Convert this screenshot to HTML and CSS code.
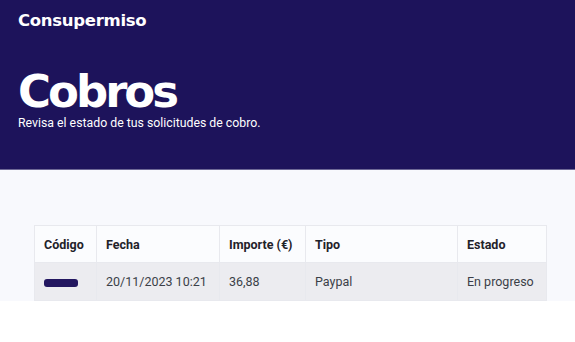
FILE: index.html
```html
<!DOCTYPE html>
<html lang="es">
<head>
<meta charset="utf-8">
<title>Cobros</title>
<link rel="stylesheet" href="styles.css">
</head>
<body>
<header class="hero">
  <div class="brand">Consupermiso</div>
  <h1 class="title">Cobros</h1>
  <p class="subtitle">Revisa el estado de tus solicitudes de cobro.</p>
</header>
<main class="content">
  <table class="table">
    <thead>
      <tr>
        <th class="c1">Código</th>
        <th class="c2">Fecha</th>
        <th class="c3">Importe (€)</th>
        <th class="c4">Tipo</th>
        <th class="c5">Estado</th>
      </tr>
    </thead>
    <tbody>
      <tr>
        <td><span class="redact"></span></td>
        <td>20/11/2023 10:21</td>
        <td>36,88</td>
        <td>Paypal</td>
        <td>En progreso</td>
      </tr>
    </tbody>
  </table>
</main>
</body>
</html>
```
FILE: styles.css
```css
* { box-sizing: border-box; }
html, body { margin: 0; padding: 0; background: #ffffff; }
body { font-family: Roboto, "Liberation Sans", sans-serif; color: #2b2f38; }

.hero {
  background: #1d135b;
  height: 170px;
  padding: 10px 18px 0;
  color: #ffffff;
  border-bottom: 1px solid #6d6896;
}
.brand {
  font-family: "DejaVu Sans", sans-serif;
  font-weight: 700;
  font-size: 16.5px;
  line-height: 22px;
  letter-spacing: -0.3px;
}
.title {
  margin: 37px 0 0;
  font-family: "DejaVu Sans", sans-serif;
  font-weight: 700;
  font-size: 45px;
  line-height: 46px;
  letter-spacing: -3px;
}
.subtitle {
  margin: 0;
  font-size: 12.3px;
  line-height: 16px;
}

.content {
  background: #f8f9fd;
  padding: 55px 29px 0 34px;
}
.table {
  width: 512px;
  border-collapse: collapse;
  font-size: 12.5px;
  table-layout: fixed;
}
.table th, .table td {
  text-align: left;
  padding: 0 9px;
  border: 1px solid #e8e9ee;
  white-space: nowrap;
}
.table th {
  height: 37px;
  background: #fbfcfe;
  font-weight: 700;
  color: #1f222a;
}
.table td {
  height: 38px;
  background: #ececf0;
  color: #3b3f48;
}
.c1 { width: 62px; }
.c2 { width: 123px; }
.c3 { width: 86px; }
.c4 { width: 152px; }
.c5 { width: 89px; }
.redact {
  display: inline-block;
  width: 34px;
  height: 8px;
  background: #231760;
  border-radius: 3px;
  vertical-align: middle;
}
```
